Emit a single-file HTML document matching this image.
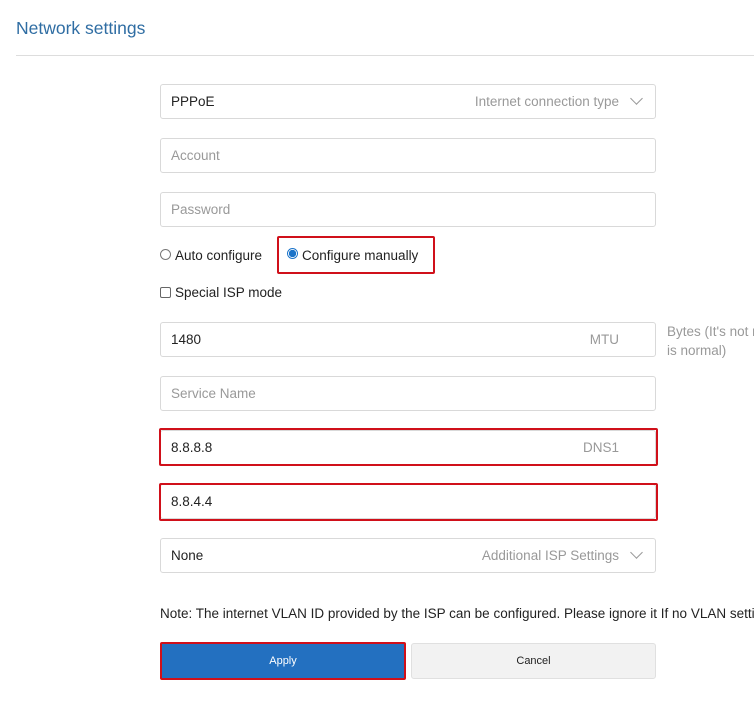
<!DOCTYPE html>
<html><head><style>
body{margin:0;width:754px;height:706px;background:#fff;font-family:"Liberation Sans",sans-serif;position:relative;overflow:hidden;font-size:13.5px;color:#222}
.a{position:absolute}
.in{position:absolute;left:160px;width:496px;height:35px;border:1px solid #d9d9d9;border-radius:3px;box-sizing:border-box}
.in span{position:absolute;left:10px;top:9px}
.ph{color:#999}
.in .rt{left:auto;right:36px;top:9px;color:#999}
.chev{position:absolute;right:14px;top:9px;width:8px;height:8px;border-right:1.5px solid #999;border-bottom:1.5px solid #999;transform:rotate(45deg)}
.red{position:absolute;border:2px solid #d0101a;box-sizing:border-box;border-radius:2px}
</style></head><body>
<div class="a" style="left:16px;top:18px;font-size:17.5px;color:#2f6da3">Network settings</div>
<div class="a" style="left:16px;top:55px;width:738px;height:1px;background:#ddd"></div>

<div class="in" style="top:84px"><span>PPPoE</span><span class="rt">Internet connection type</span><div class="chev"></div></div>
<div class="in" style="top:138px"><span class="ph">Account</span></div>
<div class="in" style="top:192px"><span class="ph">Password</span></div>

<div class="a" style="left:160px;top:249px;width:9px;height:9px;border:1px solid #777;border-radius:50%"></div>
<div class="a" style="left:175px;top:248px">Auto configure</div>
<div class="red" style="left:277px;top:236px;width:158px;height:38px"></div>
<div class="a" style="left:287px;top:248px;width:9px;height:9px;border:1px solid #1a73c9;border-radius:50%;background:radial-gradient(#1a73c9 55%,#fff 60%)"></div>
<div class="a" style="left:302px;top:248px">Configure manually</div>

<div class="a" style="left:160px;top:287px;width:9px;height:9px;border:1px solid #666;border-radius:2px"></div>
<div class="a" style="left:175px;top:285px">Special ISP mode</div>

<div class="in" style="top:322px"><span>1480</span><span class="rt">MTU</span></div>
<div class="a" style="left:667px;top:322px;color:#999;line-height:19px;white-space:nowrap">Bytes (It's not m<br>is normal)</div>
<div class="in" style="top:376px"><span class="ph">Service Name</span></div>
<div class="in" style="top:430px"><span>8.8.8.8</span><span class="rt">DNS1</span></div>
<div class="red" style="left:159px;top:428px;width:499px;height:38px"></div>
<div class="in" style="top:484px"><span>8.8.4.4</span></div>
<div class="red" style="left:159px;top:483px;width:499px;height:38px"></div>
<div class="in" style="top:538px"><span>None</span><span class="rt">Additional ISP Settings</span><div class="chev"></div></div>

<div class="a" style="left:160px;top:606px;white-space:nowrap">Note: The internet VLAN ID provided by the ISP can be configured. Please ignore it If no VLAN settings</div>

<div class="a" style="left:160px;top:642px;width:246px;height:38px;background:#2370c0;border:2px solid #d0101a;box-sizing:border-box;border-radius:2px;color:#fff;font-size:11px;text-align:center;line-height:34px">Apply</div>
<div class="a" style="left:411px;top:643px;width:245px;height:36px;background:#f2f2f2;border:1px solid #e0e0e0;box-sizing:border-box;border-radius:3px;font-size:11px;text-align:center;line-height:34px">Cancel</div>
</body></html>
